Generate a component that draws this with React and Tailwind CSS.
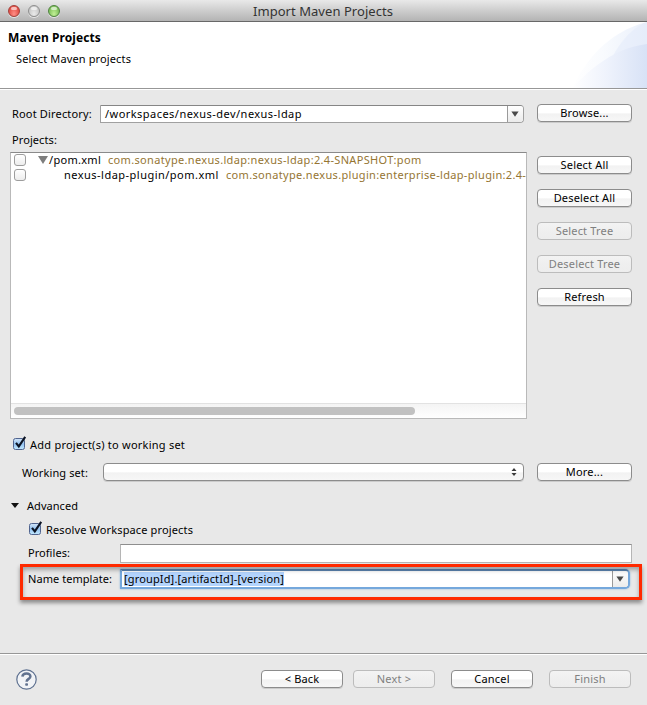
import clsx from "clsx";

const PushButton = ({ children, disabled, className }) => (
  <button
    disabled={disabled}
    className={clsx(
      "flex h-[18px] shrink-0 items-center justify-center rounded-[4px] border pb-px leading-none tracking-[0.18px]",
      disabled
        ? "border-[#bcbcbc] bg-linear-to-b from-[#f3f3f3] via-[#efefef] to-[#ededed] text-[#808080]"
        : "border-[#8c8c8c] bg-linear-to-b from-white from-50% via-[#f2f2f2] via-55% to-[#f7f7f7] text-black shadow-[0_1px_0_rgba(0,0,0,0.12)]",
      className
    )}
  >
    {children}
  </button>
);

const EmptyCheckbox = () => (
  <span className="mb-px h-3 w-3 shrink-0 rounded-[3px] border border-[#9d9d9d] bg-linear-to-b from-white to-[#ededed]" />
);

const CheckedBox = () => (
  <svg width="14" height="15" viewBox="0 0 14 15" className="mb-px shrink-0">
    <defs>
      <linearGradient id="check-fill" x1="0" y1="0" x2="0" y2="1">
        <stop offset="0" stopColor="#d5e6f8" />
        <stop offset="0.5" stopColor="#92c1f0" />
        <stop offset="1" stopColor="#c4eaff" />
      </linearGradient>
    </defs>
    <rect x="0.5" y="2.5" width="11" height="11" rx="2" fill="url(#check-fill)" stroke="#50648f" />
    <path d="M3 6.8L5.8 10.4L12.2 0.8" fill="none" stroke="#0c1424" strokeWidth="2.1" />
  </svg>
);

const DropArrow = () => (
  <span className="flex w-4 shrink-0 items-center justify-center rounded-r-[3px] border-l border-[#9a9a9a] bg-linear-to-b from-white to-[#ebebeb]">
    <svg width="8" height="6" viewBox="0 0 8 6" className="mr-0.5">
      <path d="M0.4 0.5H7.6L4 5.8Z" fill="#4a4a4a" />
    </svg>
  </span>
);

const TrafficLight = ({ className }) => (
  <span
    className={clsx(
      "flex h-3 w-3 justify-center rounded-full border shadow-[0_1px_0_rgba(255,255,255,0.6)]",
      className
    )}
  >
    <span className="mt-px h-[3px] w-1.5 rounded-full bg-white/60" />
  </span>
);

const TitleBar = () => (
  <div className="flex h-[22px] shrink-0 items-center border-b border-[#686868] bg-linear-to-b from-[#e9e9e9] to-[#b3b3b3] pl-2">
    <div className="flex w-[52px] gap-2">
      <TrafficLight className="border-[#a3403b] bg-radial-[at_50%_80%] from-[#ff8f86] to-[#d9382f]" />
      <TrafficLight className="border-[#8f8f8f] bg-radial-[at_50%_80%] from-[#e9e9e9] to-[#bdbdbd]" />
      <TrafficLight className="border-[#4f8340] bg-radial-[at_50%_80%] from-[#c1f095] to-[#68b047]" />
    </div>
    <h1 className="flex-1 pr-[61px] pt-px text-center text-[13px] leading-none tracking-[0.05px] text-[#333]">
      Import Maven Projects
    </h1>
  </div>
);

const Header = () => (
  <div className="flex h-[67px] shrink-0 justify-between border-b border-[#979797] bg-white">
    <div className="pl-2 pt-2">
      <h2 className="text-[12px] font-bold leading-4 tracking-[0.09px]">Maven Projects</h2>
      <p className="mt-[5px] pl-2 leading-4 tracking-[0.13px]">Select Maven projects</p>
    </div>
    <svg width="80" height="66" viewBox="0 0 80 66">
      <defs>
        <linearGradient id="outer-arc" x1="0" x2="1">
          <stop offset="0" stopColor="#ffffff" />
          <stop offset="0.4" stopColor="#f9fbfe" />
          <stop offset="1" stopColor="#eaf0fb" />
        </linearGradient>
        <linearGradient id="inner-arc" x1="0" x2="1">
          <stop offset="0" stopColor="#ffffff" />
          <stop offset="0.45" stopColor="#eff3fc" />
          <stop offset="1" stopColor="#d8e2f6" />
        </linearGradient>
      </defs>
      <path d="M5 66C18 40 40 10 80 0V66Z" fill="url(#outer-arc)" />
      <path d="M32 66C42 36 58 8 80 0V66Z" fill="#e2eafa" opacity="0.5" />
      <path d="M5 66C25 45 48 26 80 22V66Z" fill="url(#inner-arc)" />
    </svg>
  </div>
);

const projects = [
  {
    path: "/pom.xml",
    artifact: "com.sonatype.nexus.ldap:nexus-ldap:2.4-SNAPSHOT:pom",
    root: true,
  },
  {
    path: "nexus-ldap-plugin/pom.xml",
    artifact: "com.sonatype.nexus.plugin:enterprise-ldap-plugin:2.4-",
  },
];

const ProjectTree = () => (
  <div className="flex h-[267px] w-[517px] shrink-0 flex-col border border-[#b9b9b9] border-t-[#8a8a8a] bg-white">
    <ul className="flex-1">
      {projects.map((project) => (
        <li key={project.path} className="flex h-[15px] items-center pl-[3px] whitespace-nowrap">
          <EmptyCheckbox />
          {project.root ? (
            <>
              <svg width="10" height="8" viewBox="0 0 10 8" className="mb-px ml-3 shrink-0">
                <path d="M0 0H10L5 8Z" fill="#7d7d7d" />
              </svg>
              <span className="-mt-[3px] ml-px w-[59px] shrink-0 tracking-[0.29px]">
                {project.path}
              </span>
            </>
          ) : (
            <span className="-mt-[3px] ml-[38px] w-[162px] shrink-0 tracking-[0.48px]">
              {project.path}
            </span>
          )}
          <span className="-mt-[3px] tracking-[0.33px] text-[#957532]">{project.artifact}</span>
        </li>
      ))}
    </ul>
    <div className="flex h-[15px] shrink-0 items-center border-t border-[#e2e2e2] bg-linear-to-b from-[#f4f4f4] to-white pl-[3px]">
      <span className="h-2 w-[401px] rounded-full bg-[#c1c1c1]" />
    </div>
  </div>
);

const Advanced = () => (
  <section className="mt-4">
    <div className="flex h-4 items-center pl-[11px]">
      <svg width="8" height="5" viewBox="0 0 8 5">
        <path d="M0 0H8L4 5Z" fill="#111" />
      </svg>
      <span className="ml-2 tracking-[0.05px]">Advanced</span>
    </div>
    <div className="mt-2 flex h-4 items-center pl-[29px]">
      <CheckedBox />
      <span className="ml-[3px] tracking-[0.14px]">Resolve Workspace projects</span>
    </div>
    <div className="mt-[7px] flex h-[19px] items-center pl-7">
      <label className="w-[92px] pb-0.5 tracking-[0.05px]">Profiles:</label>
      <div className="h-[19px] w-[512px] border border-[#b5b5b5] border-t-[#8e8e8e] bg-white" />
    </div>
    <div className="relative mt-1.5 flex h-5 items-center pl-7">
      <label className="w-[92px] pb-0.5 tracking-[0.05px]">Name template:</label>
      <div className="flex h-5 w-[510px] rounded-r-[5px] border-2 border-[#75a8dc] border-t-[#5c86b3] bg-white shadow-[0_0_2px_rgba(100,160,220,0.8)]">
        <div className="flex flex-1 items-center pl-0.5">
          <span className="h-[14px] bg-[#b3d4fd] leading-[14px] tracking-[0.15px]">
            [groupId].[artifactId]-[version]
          </span>
        </div>
        <DropArrow />
      </div>
      {/* callout frame over the template row */}
      <div className="pointer-events-none absolute -top-[5px] left-5 h-[36px] w-[622px] border-[3px] border-[#ff2a00] shadow-[0_3px_4px_rgba(0,0,0,0.4),inset_0_3px_4px_rgba(0,0,0,0.3)]" />
    </div>
  </section>
);

const Footer = () => (
  <div className="flex h-[52px] shrink-0 items-center border-t border-[#979797] pb-0.5 pl-4 shadow-[inset_0_1px_0_white]">
    <svg width="21" height="21" viewBox="0 0 21 21" className="mt-0.5">
      <circle cx="10.5" cy="10.5" r="9.7" fill="#f1f3f6" stroke="#5e7190" strokeWidth="1.2" />
      <path
        d="M6.4 7.6C6.6 3.4 14.6 3.3 14.4 7.5C14.3 10 10.6 9.8 10.6 12.8"
        fill="none"
        stroke="#61728f"
        strokeWidth="2.5"
      />
      <rect x="9.2" y="14.2" width="2.8" height="2.6" rx="0.8" fill="#61728f" />
    </svg>
    <div className="ml-[224px] flex">
      <PushButton className="w-[82px]">&lt; Back</PushButton>
      <PushButton disabled className="ml-2.5 w-[82px]">Next &gt;</PushButton>
      <PushButton className="ml-4 w-[82px]">Cancel</PushButton>
      <PushButton disabled className="ml-4 w-[82px]">Finish</PushButton>
    </div>
  </div>
);

export default function App() {
  return (
    <div className="flex h-[705px] w-[647px] flex-col overflow-hidden bg-[#e8e8e8] font-['Noto_Sans',sans-serif] text-[11px] leading-[15px] text-black">
      <TitleBar />
      <Header />
      <main className="flex-1 border-t border-white">
        <div className="mt-[14px] flex h-5 items-start pl-3">
          <label className="mt-0.5 w-[88px] tracking-[0.17px]">Root Directory:</label>
          <div className="mt-px flex h-[18px] w-[424px] rounded-r-[4px] border border-[#a0a0a0] border-t-[#858585] bg-white">
            <span className="flex flex-1 items-center pb-0.5 pl-1 tracking-[0.46px]">
              /workspaces/nexus-dev/nexus-ldap
            </span>
            <DropArrow />
          </div>
          <PushButton className="ml-[13px] w-[95px]">Browse...</PushButton>
        </div>
        <p className="mt-2 h-[15px] pl-3 tracking-[0.09px]">Projects:</p>
        <div className="mt-[5px] flex pl-2.5">
          <ProjectTree />
          <div className="ml-2.5 mt-1 flex w-[95px] flex-col gap-[15px]">
            <PushButton>Select All</PushButton>
            <PushButton>Deselect All</PushButton>
            <PushButton disabled>Select Tree</PushButton>
            <PushButton disabled>Deselect Tree</PushButton>
            <PushButton>Refresh</PushButton>
          </div>
        </div>
        <div className="mt-[17px] flex h-4 items-center pl-[13px]">
          <CheckedBox />
          <span className="ml-[3px] tracking-[0.24px]">Add project(s) to working set</span>
        </div>
        <div className="mt-[11px] flex h-[18px] items-center pl-[22px]">
          <label className="w-[81px] tracking-[0.1px]">Working set:</label>
          <div className="flex h-[18px] w-[421px] items-center justify-end rounded-[4px] border border-[#8c8c8c] bg-linear-to-b from-white from-50% via-[#f2f2f2] via-55% to-[#f7f7f7] pr-1.5 shadow-[0_1px_0_rgba(0,0,0,0.12)]">
            <svg width="6" height="8" viewBox="0 0 6 8">
              <path d="M0.5 3H5.5L3 0ZM0.5 5H5.5L3 8Z" fill="#3a3a3a" />
            </svg>
          </div>
          <PushButton className="ml-[13px] w-[95px]">More...</PushButton>
        </div>
        <Advanced />
      </main>
      <Footer />
    </div>
  );
}
